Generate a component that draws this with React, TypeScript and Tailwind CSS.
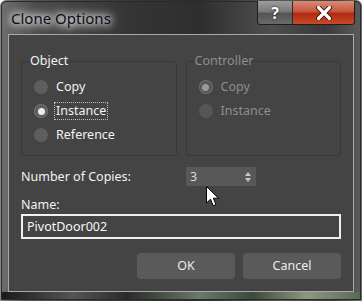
import React from "react";

const font = { fontFamily: '"Noto Sans", "Open Sans", sans-serif' };

function Radio({ checked, disabled }: { checked?: boolean; disabled?: boolean }) {
  return (
    <span
      className={`flex h-[14px] w-[14px] shrink-0 items-center justify-center rounded-full ${
        disabled ? "bg-[#565656]" : "bg-[#5e5e5e]"
      } ${checked ? "shadow-[inset_0_0_0_1px_#6e6e6e]" : ""}`}
    >
      {checked && (
        <span
          className={`h-[7px] w-[7px] rounded-full ${disabled ? "bg-[#9a9a9a]" : "bg-[#ececec]"}`}
        />
      )}
    </span>
  );
}

function Group({
  label,
  disabled,
  children,
}: {
  label: string;
  disabled?: boolean;
  children: React.ReactNode;
}) {
  return (
    <fieldset className="h-[102px] flex-1 rounded-[3px] border border-[#393939] px-[12px] pt-[12px] pb-0">
      <legend
        className={`ml-[-5px] px-[1px] text-[12.5px] leading-[14px] ${
          disabled ? "text-[#8e8e8e]" : "text-[#f2f2f2]"
        }`}
      >
        {label}
      </legend>
      <div className="flex flex-col gap-[10px]">{children}</div>
    </fieldset>
  );
}

function Option({
  label,
  checked,
  disabled,
  focused,
}: {
  label: string;
  checked?: boolean;
  disabled?: boolean;
  focused?: boolean;
}) {
  return (
    <div className="flex h-[14px] items-center gap-[8px]">
      <Radio checked={checked} disabled={disabled} />
      <span
        className={`text-[12.5px] leading-[16px] ${disabled ? "text-[#8e8e8e]" : "text-[#f2f2f2]"} ${
          focused ? "-ml-[2px] border border-dotted border-[#bdbdbd] px-[1px]" : ""
        }`}
      >
        {label}
      </span>
    </div>
  );
}

export default function App() {
  return (
    <div
      style={font}
      className="relative h-[301px] w-[362px] overflow-hidden rounded-t-[6px] bg-[linear-gradient(90deg,#8a8a8a_0%,#5a5a5a_6%,#3c3c3c_30%,#2c2c2c_55%,#5a5a5a_78%,#3e3e3e_92%,#6a6a6a_100%)] p-[1px]"
    >
      <div className="flex h-full flex-col rounded-t-[5px] border border-[#2a2a2a] bg-[linear-gradient(90deg,#6c6c6c_0%,#4a4a4a_10%,#353535_35%,#2e2e2e_55%,#4e4e4e_75%,#3a3a3a_90%,#5a5a5a_100%)]">
        {/* Title bar */}
        <div className="flex h-[32px] items-start justify-between pl-[9px] pr-[5px]">
          <span className="mt-[7px] rounded-[10px] text-[15px] leading-[18px] text-[#0c0c1c] [text-shadow:0_0_6px_#ffffff,0_0_10px_#ffffff,0_0_14px_#ffffff]">
            Clone Options
          </span>
          <div className="-mt-[1px] flex h-[24px] overflow-hidden rounded-b-[4px] border border-t-0 border-[#1e1e1e]">
            <div className="flex w-[35px] items-center justify-center border-r border-[#2a2a2a] bg-[linear-gradient(180deg,#9c9c9c_0%,#7a7a7a_45%,#555_55%,#6a6a6a_100%)] text-[16px] font-bold leading-none text-white [text-shadow:0_0_2px_#000]">
              ?
            </div>
            <div className="flex w-[61px] items-center justify-center bg-[linear-gradient(180deg,#d88a78_0%,#c8583e_45%,#b02a12_55%,#c84a2a_100%)] text-[16px] font-bold leading-none text-white">
              <svg width="16" height="14" viewBox="0 0 16 14">
                <path d="M2.5 1.5 L13.5 12.5 M13.5 1.5 L2.5 12.5" stroke="#3a0a00" strokeWidth="5" strokeLinecap="round" />
                <path d="M2.5 1.5 L13.5 12.5 M13.5 1.5 L2.5 12.5" stroke="#ffffff" strokeWidth="3.2" strokeLinecap="round" />
              </svg>
            </div>
          </div>
        </div>

        {/* Client area */}
        <div className="mx-[6px] flex flex-1 flex-col border border-[#a8a8a8] bg-[#444444] px-[12px] pt-[19px]">
          <div className="flex gap-[9px]">
            <Group label="Object">
              <Option label="Copy" />
              <Option label="Instance" checked focused />
              <Option label="Reference" />
            </Group>
            <Group label="Controller" disabled>
              <Option label="Copy" checked disabled />
              <Option label="Instance" disabled />
            </Group>
          </div>

          <div className="mt-[11px] flex h-[19px] items-center">
            <span className="w-[165px] text-[12.5px] leading-[16px] text-[#f2f2f2]">
              Number of Copies:
            </span>
            <div className="flex h-[19px] w-[70px] items-center justify-between bg-[#585858] pl-[4px] pr-[4px]">
              <span className="text-[12.5px] leading-[16px] text-[#dcdcdc]">3</span>
              <svg width="8" height="12" viewBox="0 0 8 12">
                <path d="M4 1 L7 5 L1 5 Z" fill="#c8c8c8" />
                <path d="M4 11 L7 7 L1 7 Z" fill="#c8c8c8" />
              </svg>
            </div>
          </div>

          <div className="mt-[11px] text-[12.5px] leading-[16px] text-[#f2f2f2]">Name:</div>
          <div className="mt-[1px] flex h-[25px] items-center border-2 border-[#f0f0f0] bg-[#444444] pl-[4px]">
            <span className="text-[12.5px] leading-[16px] text-[#f8f8f8]">PivotDoor002</span>
          </div>

          <div className="mt-[14px] flex justify-end gap-[8px]">
            <button className="h-[26px] w-[98px] rounded-[4px] bg-[#5a5a5a] text-[12.5px] text-[#ececec]">
              OK
            </button>
            <button className="h-[26px] w-[98px] rounded-[4px] bg-[#5a5a5a] text-[12.5px] text-[#ececec]">
              Cancel
            </button>
          </div>
        </div>
        <div className="h-[7px] bg-[linear-gradient(90deg,#1a1a1a_0%,#555_20%,#2a2a2a_35%,#6a7a68_55%,#3a4a38_70%,#8a9a80_85%,#5a6a58_100%)]" />
      </div>

      {/* Mouse cursor */}
      <svg
        className="absolute left-[206px] top-[186px]"
        width="14"
        height="22"
        viewBox="0 0 14 22"
      >
        <path
          d="M0.5 0.5 L0.5 17 L4.5 13.2 L7.2 19.8 L10 18.6 L7.3 12.2 L12.5 12.2 Z"
          fill="#ffffff"
          stroke="#000000"
          strokeWidth="1"
          strokeLinejoin="miter"
        />
      </svg>
    </div>
  );
}
